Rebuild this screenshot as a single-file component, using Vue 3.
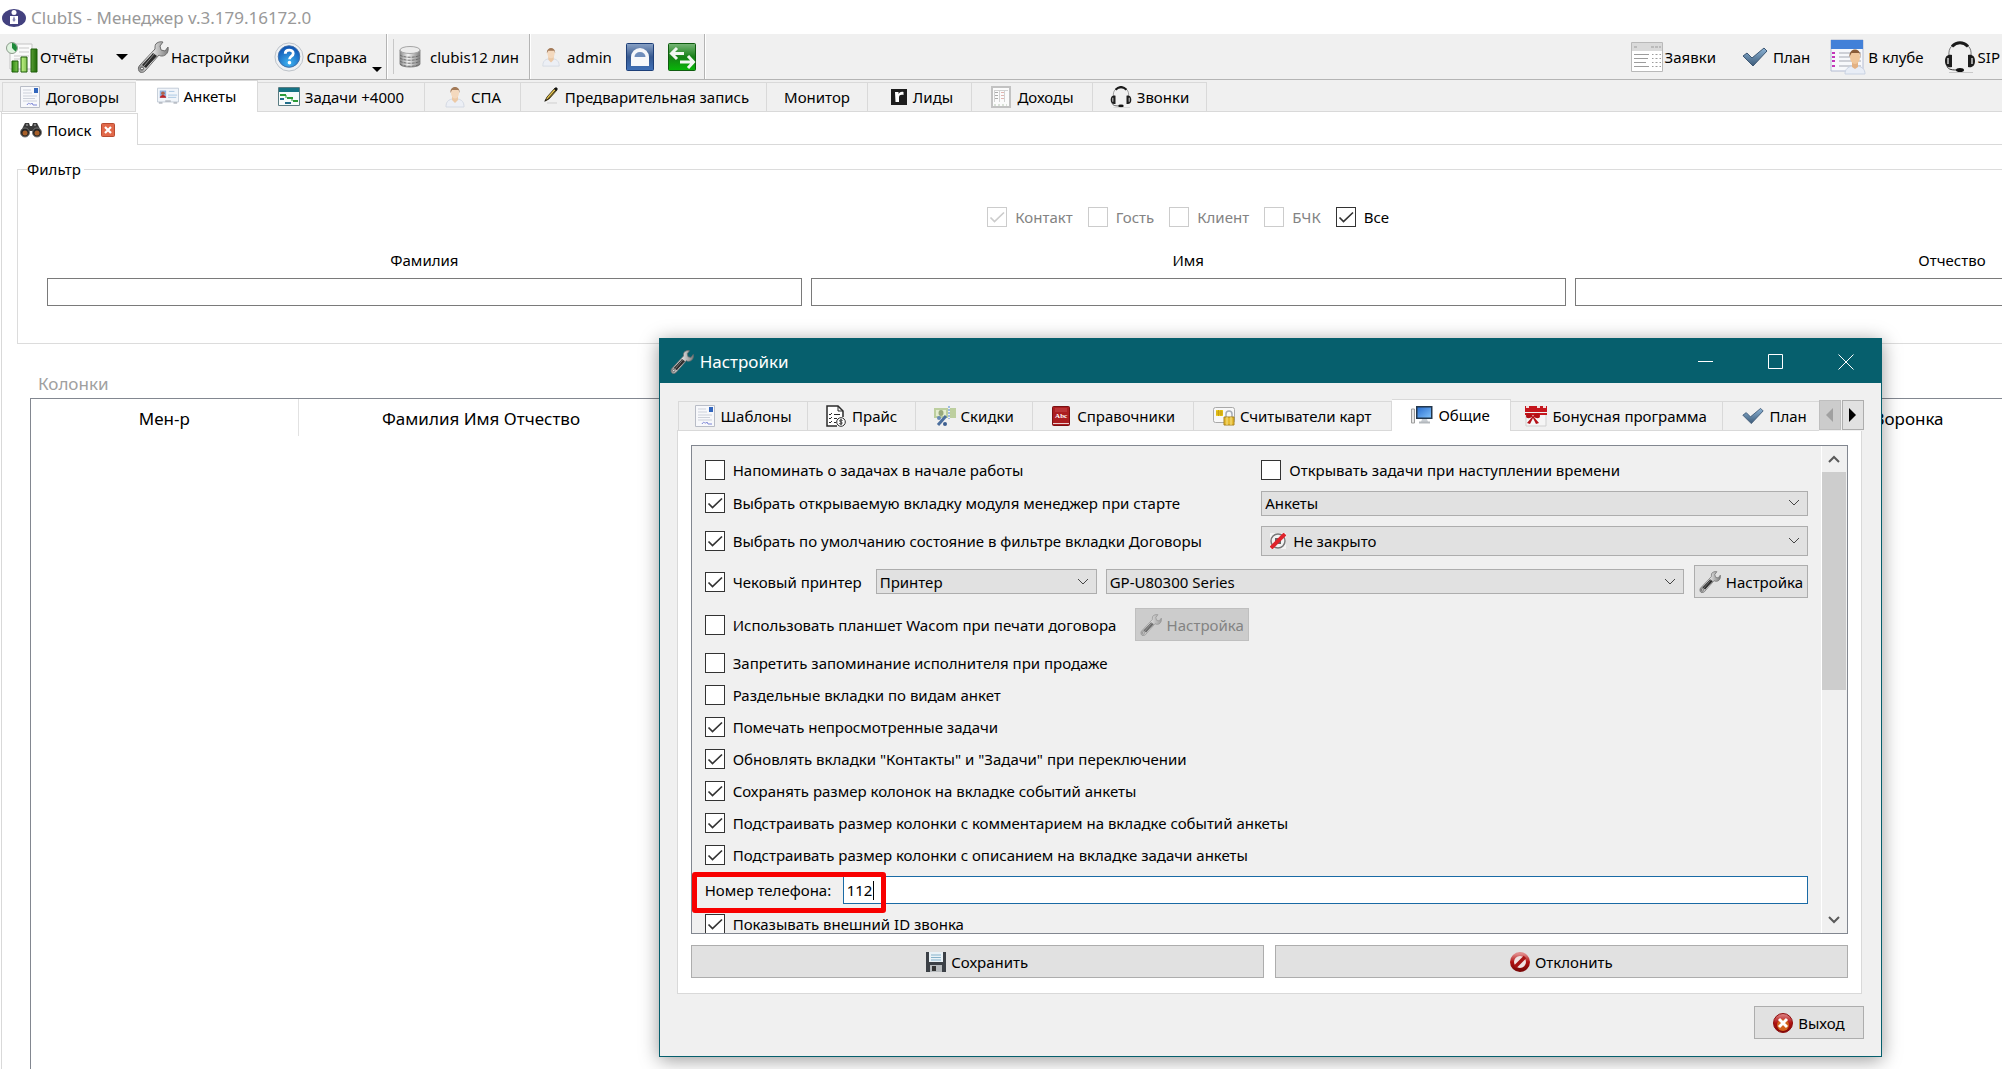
<template>
  <div class="app">
    <svg class="sprite" aria-hidden="true">
      <defs>
        <linearGradient id="gGreen" x1="0" x2="1">
          <stop offset="0" stop-color="#2f8a12" /><stop offset=".4" stop-color="#b6ec7c" /><stop offset="1" stop-color="#1f6a08" />
        </linearGradient>
        <linearGradient id="gMetal" x1="0" x2="1">
          <stop offset="0" stop-color="#8a8a8a" /><stop offset=".4" stop-color="#f4f4f4" /><stop offset="1" stop-color="#7d7d7d" />
        </linearGradient>
        <radialGradient id="gHelp" cx=".5" cy=".8" r=".8">
          <stop offset="0" stop-color="#3fb4f2" /><stop offset="1" stop-color="#0c4eae" />
        </radialGradient>
        <linearGradient id="gLock" x1="0" y1="0" x2="0" y2="1">
          <stop offset="0" stop-color="#8ba3c6" /><stop offset=".5" stop-color="#36588f" /><stop offset="1" stop-color="#3f70b8" />
        </linearGradient>
        <linearGradient id="gSwap" x1="0" y1="0" x2="0" y2="1">
          <stop offset="0" stop-color="#79b779" /><stop offset=".5" stop-color="#168016" /><stop offset="1" stop-color="#08b808" />
        </linearGradient>
        <linearGradient id="gCheck" x1="0" y1="0" x2="0" y2="1">
          <stop offset="0" stop-color="#8db4d6" /><stop offset="1" stop-color="#3c5a78" />
        </linearGradient>
        <linearGradient id="gRed" x1="0" y1="0" x2="0" y2="1">
          <stop offset="0" stop-color="#e08a8a" /><stop offset=".5" stop-color="#b01212" /><stop offset="1" stop-color="#7c0808" />
        </linearGradient>
        <linearGradient id="gBlue" x1="0" y1="0" x2="1" y2="1">
          <stop offset="0" stop-color="#2a6fd0" /><stop offset="1" stop-color="#7fc0fa" />
        </linearGradient>
      </defs>

      <symbol id="logo" viewBox="0 0 24 20">
        <ellipse cx="12" cy="10" rx="12" ry="9" fill="#43417f" />
        <circle cx="12" cy="4.500" r="2.500" fill="#fff" />
        <path d="M8 8h8v8H8z" fill="#fff" /><path d="M12 8l1.500 4-1.500 2-1.500-2z" fill="#8a89b5" />
      </symbol>
      <symbol id="report" viewBox="0 0 32 32">
        <path d="M4 3h22v25H4z" fill="#fafafa" stroke="#c4c4c4" />
        <path d="M13 7h10M13 11h10M8 15h15M8 18h8" stroke="#c9c9c9" />
        <circle cx="6" cy="7" r="5.500" fill="#dff3df" stroke="#8b9b8b" />
        <path d="M6 7V2a5 5 0 0 1 3.500 8.500z" fill="#1e8a3a" />
        <path d="M6 20h6v11H6zM15 16h6v15h-6zM25 8h6v23h-6z" fill="url(#gGreen)" stroke="#1c5c08" />
      </symbol>
      <symbol id="wrench" viewBox="0 0 32 32">
        <path d="M20 2c3-2 6-1 6-1l-3 4 1 4 4 1 3-4c1 5-2 9-6 9-1 0-2 0-3-1L8 30c-2 2-5 2-6 0s-1-4 1-6l15-16c0-3 0-5 2-6z" fill="url(#gMetal)" stroke="#6d6d6d" />
        <path d="M16 12l4 3L9 27l-4-3z" fill="#2c2c2c" /><path d="M17 13L7 25" stroke="#8d8d8d" />
        <circle cx="5" cy="27.500" r="1.500" fill="#efefef" stroke="#555" />
      </symbol>
      <symbol id="help" viewBox="0 0 32 32">
        <circle cx="16" cy="16" r="15" fill="#eef1f4" stroke="#b9bec4" />
        <circle cx="16" cy="15.500" r="11.500" fill="url(#gHelp)" stroke="#3f6ea8" />
        <path d="M12 12.500c0-5 8.500-5 8.500-.3 0 3-4 3-4 6.300" fill="none" stroke="#fff" stroke-width="3" />
        <circle cx="16.500" cy="22" r="1.900" fill="#fff" />
      </symbol>
      <symbol id="db" viewBox="0 0 22 22">
        <path d="M1 4v14c0 4 20 4 20 0V4z" fill="url(#gMetal)" stroke="#8c8c8c" />
        <path d="M1 9c3 3 17 3 20 0M1 12c3 3 17 3 20 0M1 15c3 3 17 3 20 0M1 18c3 3 17 3 20 0" fill="none" stroke="#6b6b6b" stroke-dasharray="3 1" />
        <ellipse cx="11" cy="4" rx="10" ry="3.500" fill="#ececec" stroke="#a5a5a5" />
      </symbol>
      <symbol id="person" viewBox="0 0 20 22">
        <path d="M1 21c0-5 2-7 6-8h6c4 1 6 3 6 8z" fill="#eceff5" stroke="#d4d9e3" />
        <path d="M7 10h6v4l-3 3-3-3z" fill="#ecc9a6" />
        <ellipse cx="10" cy="7" rx="4" ry="5.500" fill="#f4d9be" />
        <path d="M5.500 7c-1-8 10-8 9 0l-1-3H7z" fill="#a37a58" />
      </symbol>
      <symbol id="lock" viewBox="0 0 28 28">
        <rect x=".5" y=".5" width="27" height="27" rx="1" fill="url(#gLock)" stroke="#1d3f78" />
        <path d="M5 23V14a9 9 0 0 1 18 0v9z" fill="#f6f7fa" />
        <path d="M8.500 14a5.500 5 0 0 1 11 0z" fill="#6f8dbb" />
      </symbol>
      <symbol id="swap" viewBox="0 0 28 28">
        <rect x=".5" y=".5" width="27" height="27" rx="1" fill="url(#gSwap)" stroke="#0f5c0f" />
        <path d="M16 10.500H4M9 5l-5.500 5.500L9 16M12 19h12M20 13l5.500 6-5.500 6" fill="none" stroke="#f2f7f2" stroke-width="3" />
      </symbol>
      <symbol id="requests" viewBox="0 0 32 30">
        <path d="M.5.5h31v29H.5z" fill="#fff" stroke="#b9b9b9" /><path d="M1 1h30v8H1z" fill="#dadada" />
        <path d="M3 5h3M20 5h3M24 5h3M28 5h2M3 12.500h15M3 16.500h14M3 20.500h12M3 24.500h15M21 12.500h9M21 16.500h9M21 20.500h9M21 24.500h9" stroke="#9c9c9c" />
        <path d="M23.500 11v15M27.500 11v15" stroke="#fff" stroke-width="2" />
      </symbol>
      <symbol id="check" viewBox="0 0 26 20">
        <path d="M1 9l4-3 5 5L22 1l3 3-14 15z" fill="url(#gCheck)" stroke="#3c5774" stroke-linejoin="round" />
      </symbol>
      <symbol id="club" viewBox="0 0 36 36">
        <path d="M1 1h32v31H1z" fill="#f7f8fb" stroke="#b3bcd2" /><path d="M1 1h32v9H1z" fill="#4280d8" />
        <path d="M9 14h22M9 18h22M9 22h22M9 27h22" stroke="#a5a8b2" />
        <path d="M2 14h3M2 18h3M2 22h3M2 27h3" stroke="#c335b8" stroke-width="2" />
        <path d="M15 35c0-5 3-7 7-8h6c4 1 7 3 7 8z" fill="#e8edf6" stroke="#c9d2e2" />
        <path d="M22 22h6v6l-3 2-3-2z" fill="#e3b183" /><ellipse cx="25" cy="18" rx="5" ry="7" fill="#f0c79c" />
        <path d="M19.500 18c-1-10 12-10 11 0l-1-4h-8z" fill="#8a5c38" />
      </symbol>
      <symbol id="headset" viewBox="0 0 32 32">
        <path d="M5 15C4 6 9 2.500 16 2.500S28 6 27 15" fill="none" stroke="#777" />
        <path d="M8 5.500c5-5 11-5 16 0" fill="none" stroke="#1b1b1b" stroke-width="3" />
        <path d="M8 14v12c-4 1-7-1-7-6s3-7 7-6zM24 14v12c4 1 7-1 7-6s-3-7-7-6z" fill="#1d1d1d" />
        <path d="M4 17v6M28 17v6" stroke="#a2a2a2" stroke-width="2" />
        <path d="M3 25c1 4 6 4 11 4" fill="none" stroke="#333" /><ellipse cx="16" cy="29" rx="4" ry="2" fill="#111" />
        <path d="M5 31.500h24" stroke="#c9c9c9" />
      </symbol>
      <symbol id="doc" viewBox="0 0 20 22">
        <path d="M.5.500h19v21H.5z" fill="#f7f8fb" stroke="#b8bcc6" /><path d="M14 2h4v5h-4z" fill="#3266bd" />
        <path d="M3 4h8M3 7h9M3 10h14M3 12.500h12M3 15h14" stroke="#cdd1da" /><path d="M7 19c2-4 3 1 5-2l1 2h4" fill="none" stroke="#7d86d6" />
      </symbol>
      <symbol id="card" viewBox="0 0 24 18">
        <path d="M.5.500h23v15H.5z" fill="#f1f5fa" stroke="#c0c8d4" /><path d="M3 3h7v8H3z" fill="#8fb0df" />
        <circle cx="6.500" cy="6" r="2" fill="#b2634c" /><path d="M3 11c1-4 6-4 7 0z" fill="#c02222" />
        <path d="M13 4h6M12 8h10M12 10.500h9" stroke="#a9c6e2" /><path d="M2 16.500h4M9 14.500h6M18 16.500h4" stroke="#b9bec6" stroke-width="2" />
      </symbol>
      <symbol id="gantt" viewBox="0 0 22 20">
        <path d="M.5.500h21v18H.5z" fill="#f6fbfb" stroke="#5a7c82" /><path d="M1 1h20v4H1z" fill="#157284" />
        <path d="M2 8h6M9 11h6M15 14h5" stroke="#2b9a37" stroke-width="2" /><path d="M8 8v3M14 11v3" stroke="#2b9a37" />
        <path d="M2 12h4M7 16h6" stroke="#226f8c" stroke-width="2" />
      </symbol>
      <symbol id="pencil" viewBox="-5 -1 22 22">
        <path d="M2 14l2-4 8-9 2 2-8 9z" fill="#e9c64c" stroke="#4a4024" /><path d="M11 2l2-2 2 2-2 2z" fill="#111" /><path d="M13 3L4 13" stroke="#2c2715" /><path d="M1 15l2-3 1 1z" fill="#111" /><path d="M4 16h10" stroke="#cfcfcf" />
      </symbol>
      <symbol id="leads" viewBox="-5 -3 22 22">
        <path d="M0 0h16v16H0z" fill="#1d1d1d" /><path d="M4 3h3.500v2C9 3 10 2.500 12.500 3v3C10 5.500 8 6 8 8.500V13H4.500z" fill="#fff" />
      </symbol>
      <symbol id="sheet" viewBox="0 0 20 22">
        <path d="M1 1h18v20H1z" fill="#fbfbfb" stroke="#c2c2c2" stroke-width="2" />
        <path d="M3.500 4v12M8.500 4v12M13.500 4v12M3 4.500h14" stroke="#d2d2d2" /><path d="M4 6.500h3M4 9.500h3M4 12.500h3" stroke="#aaa" /><path d="M10 6.500h3M10 9.500h3M10 12.500h3" stroke="#e0b5b0" /><path d="M3 19h13" stroke="#b7c7b4" stroke-dasharray="2 2" />
      </symbol>
      <symbol id="binoculars" viewBox="0 0 22 16">
        <path d="M5 1h4l1 3h2l1-3h4l4 8v4h-8V9h-4v4H1V9z" fill="#3a3a3a" />
        <circle cx="5" cy="10.500" r="4.500" fill="#262626" stroke="#777" /><circle cx="17" cy="10.500" r="4.500" fill="#262626" stroke="#777" />
        <circle cx="5" cy="11" r="2.500" fill="#a8602a" /><circle cx="17" cy="11" r="2.500" fill="#a8602a" /><path d="M6 3h2M14 3h2" stroke="#bbb" />
      </symbol>
      <symbol id="closeTab" viewBox="0 0 14 14">
        <rect x=".5" y=".5" width="13" height="13" rx="1" fill="#e2694a" stroke="#b84c32" /><path d="M4 4l6 6M10 4l-6 6" stroke="#fff" stroke-width="2.200" />
      </symbol>
      <symbol id="price" viewBox="0 0 20 22">
        <path d="M17 12V6l-5-5H1v20h10" fill="#fff" stroke="#2b2b2b" stroke-width="1.500" /><path d="M12 1v5h5" fill="none" stroke="#2b2b2b" />
        <path d="M3 9l1 1 2-2M3 13l1 1 2-2M3 17l1 1 2-2M8 9.500h6M8 13.500h3M8 17.500h2" fill="none" stroke="#2b2b2b" />
        <circle cx="15" cy="17" r="4.300" fill="#fff" stroke="#2b2b2b" /><path d="M16.500 15.500c-3-1.500-4 1-1.500 1.500s1 3-1.700 1.500M15 14v6" fill="none" stroke="#2b2b2b" />
      </symbol>
      <symbol id="discount" viewBox="0 0 22 20">
        <path d="M0 2h14v10H0zM16 2h6v10h-6z" fill="#bdcf9f" /><path d="M2 4h10v6H2z" fill="#e4edd0" /><ellipse cx="7" cy="7" rx="2.500" ry="3" fill="#98a97c" />
        <path d="M15 0v13" stroke="#4a86d0" stroke-dasharray="2 1" /><path d="M12 10L4 19" stroke="#4c6f9e" stroke-width="3" /><circle cx="5" cy="12" r="2" fill="#6689b6" /><circle cx="11" cy="18" r="2" fill="#3d5f90" />
      </symbol>
      <symbol id="book" viewBox="-2 -1 22 22">
        <rect x=".5" y=".5" width="17" height="19" rx="1" fill="#ab1d20" stroke="#791012" /><path d="M1 17.500h16" stroke="#e9d0d0" /><path d="M3 3h12M3 5h12" stroke="#c84a4c" />
      </symbol>
      <symbol id="reader" viewBox="0 0 22 20">
        <rect x=".5" y="1.500" width="21" height="15" rx="2" fill="#f8f8f8" stroke="#a9a9a9" /><path d="M3 4h7v6H3z" fill="#f0cf1e" /><path d="M3 6h7M3 8h7M5.500 4v6M8 4v6" stroke="#c79f12" />
        <path d="M13 12V8c0-4 6-4 6 0v4" fill="none" stroke="#a6acb4" stroke-width="1.500" /><path d="M11 11h10v8H11z" fill="#e5bb32" stroke="#a8821c" /><path d="M14 11v8M18 11v8" stroke="#f7e28c" />
      </symbol>
      <symbol id="computer" viewBox="0 0 22 20">
        <path d="M.5 4h3v14h-3z" fill="#e7e7e7" stroke="#9c9c9c" /><path d="M5 1h16.500v13H5z" fill="#23374c" /><path d="M6.500 2.500h13.500v10H6.500z" fill="url(#gBlue)" />
        <path d="M11 14h5l1 3h-7z" fill="#c9ced3" /><path d="M8 17.500h11" stroke="#b3b8bd" stroke-width="2" />
      </symbol>
      <symbol id="gift" viewBox="0 0 22 22">
        <path d="M1 9h20v12H1z" fill="#f5f5f5" stroke="#cfcfcf" /><path d="M0 1h22v6H0zM0 8h22v2H0z" fill="#c5161d" /><path d="M1 1h3v2H1zM12 1h3v2h-3zM18 1h3v2h-3z" fill="#f5dede" />
        <path d="M8 11c-4-4-7-3-7 0s4 3 7 0zM8 11c4-4 7-3 7 0s-4 3-7 0zM8 11l-6 7 3 1 3-6 3 6 3-1z" fill="#b40f16" />
      </symbol>
      <symbol id="notClosed" viewBox="0 0 16 16">
        <path d="M0 0h16v16H0z" fill="#f3f3f3" /><circle cx="8" cy="8" r="7" fill="none" stroke="#777" stroke-width="1.500" /><path d="M5 5h6v6H5z" fill="#666" /><path d="M1 15L15 1" stroke="#df242c" stroke-width="4" />
      </symbol>
      <symbol id="save" viewBox="0 0 20 20">
        <path d="M0 0h20v20H0z" fill="#3b4046" /><path d="M3 0h14v10H3z" fill="#eaf2f7" /><path d="M5 3h10M5 5.500h10M5 8h10" stroke="#87b3cb" /><path d="M4 13h12v7H4z" fill="#b6babd" /><path d="M6 14h4v5H6z" fill="#333" />
      </symbol>
      <symbol id="deny" viewBox="0 0 20 20">
        <circle cx="10" cy="10" r="8" fill="#efe3e3" stroke="url(#gRed)" stroke-width="4" /><path d="M5 15L15 5" stroke="#a81414" stroke-width="3.500" />
      </symbol>
      <symbol id="exit" viewBox="0 0 20 20">
        <circle cx="10" cy="10" r="9.500" fill="url(#gRed)" stroke="#8e0d0d" /><ellipse cx="10" cy="12" rx="6" ry="6" fill="#d2621c" /><path d="M6 6l8 8M14 6l-8 8" stroke="#fff" stroke-width="3" />
      </symbol>
    </svg>

    <header class="titlebar">
      <svg class="logo"><use href="#logo" /></svg>
      <span>ClubIS - Менеджер v.3.179.16172.0</span>
    </header>

    <div class="toolbar">
      <div class="tool-group group-main">
        <button class="tool reports" type="button"><svg class="i32"><use href="#report" /></svg>Отчёты<i class="arrow"></i></button>
        <button class="tool" type="button"><svg class="i32"><use href="#wrench" /></svg>Настройки</button>
        <button class="tool help" type="button"><svg class="i30"><use href="#help" /></svg>Справка<i class="arrow small"></i></button>
      </div>
      <div class="tool-group group-db">
        <button class="tool" type="button"><svg class="i22"><use href="#db" /></svg>clubis12 лин</button>
      </div>
      <div class="tool-group group-user">
        <button class="tool" type="button"><svg class="i20"><use href="#person" /></svg>admin</button>
        <button class="tool" type="button" aria-label="Блокировка"><svg class="i28"><use href="#lock" /></svg></button>
        <button class="tool" type="button" aria-label="Сменить пользователя"><svg class="i28"><use href="#swap" /></svg></button>
      </div>
      <div class="tool-right">
        <button class="tool" type="button"><svg class="i32"><use href="#requests" /></svg>Заявки</button>
        <button class="tool plan" type="button"><svg class="i26"><use href="#check" /></svg>План</button>
        <button class="tool" type="button"><svg class="i36"><use href="#club" /></svg>В клубе</button>
        <button class="tool" type="button"><svg class="i32"><use href="#headset" /></svg>SIP</button>
      </div>
    </div>

    <nav class="tabs" role="tablist">
      <button
        v-for="tab in mainTabs"
        :key="tab.title"
        class="tab"
        :class="{ active: tab.title === activeMain }"
        :style="{ width: tab.width + 'px' }"
        type="button"
        role="tab"
        @click="activeMain = tab.title"
      >
        <svg v-if="tab.icon" class="tab-icon"><use :href="'#' + tab.icon" /></svg>{{ tab.title }}
      </button>
    </nav>

    <main class="page">
      <div class="subtabs">
        <div class="subtab">
          <svg class="i22"><use href="#binoculars" /></svg>
          <span>Поиск</span>
          <button class="close-tab" type="button" aria-label="Закрыть вкладку"><svg class="i14"><use href="#closeTab" /></svg></button>
        </div>
      </div>

      <fieldset class="filter">
        <legend>Фильтр</legend>
        <div class="kinds">
          <label v-for="kind in kinds" :key="kind.title" class="check" :class="{ off: kind.disabled }">
            <input v-model="kind.checked" type="checkbox" :disabled="kind.disabled" />{{ kind.title }}
          </label>
        </div>
        <div class="names">
          <label v-for="name in ['Фамилия', 'Имя', 'Отчество']" :key="name">{{ name }}<input type="text" /></label>
        </div>
      </fieldset>

      <section class="list">
        <p class="columns-title">Колонки</p>
        <div class="table-box">
          <table>
            <thead>
              <tr>
                <th class="col-manager">Мен-р</th>
                <th class="col-name">Фамилия Имя Отчество</th>
                <th></th>
                <th class="col-funnel">Воронка</th>
              </tr>
            </thead>
          </table>
        </div>
      </section>
    </main>

    <div class="dialog" role="dialog" aria-labelledby="dialog-title">
      <div class="dialog-head">
        <svg class="i24"><use href="#wrench" /></svg>
        <span id="dialog-title">Настройки</span>
        <div class="window-buttons">
          <button type="button" aria-label="Свернуть"><svg viewBox="0 0 16 16"><path d="M0 7.500h15" /></svg></button>
          <button type="button" aria-label="Развернуть"><svg viewBox="0 0 16 16"><path d="M.5.500h14v14H.5z" /></svg></button>
          <button type="button" aria-label="Закрыть"><svg viewBox="0 0 16 16"><path d="M.5.500l15 15M15.500.500l-15 15" /></svg></button>
        </div>
      </div>

      <div class="dialog-body">
        <div class="dialog-tabs">
          <div class="tabs" role="tablist">
            <button
              v-for="tab in settingsTabs"
              :key="tab.title"
              class="tab"
              :class="{ active: tab.title === activeSettings }"
              :style="{ width: tab.width + 'px' }"
              type="button"
              role="tab"
              @click="activeSettings = tab.title"
            >
              <span class="icon-box">
                <svg class="tab-icon"><use :href="'#' + tab.icon" /></svg>
                <small v-if="tab.mark">{{ tab.mark }}</small>
              </span>{{ tab.title }}
            </button>
          </div>
          <button class="scroll-tab" type="button" disabled aria-label="Влево"><i class="tri left"></i></button>
          <button class="scroll-tab" type="button" aria-label="Вправо"><i class="tri right"></i></button>
        </div>

        <div class="panel">
          <div class="scroll-box">
            <form class="options" @submit.prevent>
              <div class="row two">
                <label class="check"><input type="checkbox" />Напоминать о задачах в начале работы</label>
                <label class="check"><input type="checkbox" />Открывать задачи при наступлении времени</label>
              </div>
              <div class="row two start-row">
                <label class="check"><input type="checkbox" checked />Выбрать открываемую вкладку модуля менеджер при старте</label>
                <div class="combo">
                  <select aria-label="Вкладка при старте"><option>Анкеты</option></select>
                  <svg class="chevron" viewBox="0 0 12 8"><path d="M1 1l5 5 5-5" /></svg>
                </div>
              </div>
              <div class="row two state-row">
                <label class="check"><input type="checkbox" checked />Выбрать по умолчанию состояние в фильтре вкладки Договоры</label>
                <div class="combo with-icon">
                  <svg class="combo-icon"><use href="#notClosed" /></svg>
                  <select aria-label="Состояние договора"><option>Не закрыто</option></select>
                  <svg class="chevron" viewBox="0 0 12 8"><path d="M1 1l5 5 5-5" /></svg>
                </div>
              </div>
              <div class="row tall">
                <label class="check first"><input type="checkbox" checked />Чековый принтер</label>
                <div class="combo device">
                  <select aria-label="Устройство"><option>Принтер</option></select>
                  <svg class="chevron" viewBox="0 0 12 8"><path d="M1 1l5 5 5-5" /></svg>
                </div>
                <div class="combo model">
                  <select aria-label="Модель"><option>GP-U80300 Series</option></select>
                  <svg class="chevron" viewBox="0 0 12 8"><path d="M1 1l5 5 5-5" /></svg>
                </div>
                <button class="btn setup" type="button"><svg class="i22"><use href="#wrench" /></svg>Настройка</button>
              </div>
              <div class="row tall">
                <label class="check tablet"><input type="checkbox" />Использовать планшет Wacom при печати договора</label>
                <button class="btn setup" type="button" disabled><svg class="i22"><use href="#wrench" /></svg>Настройка</button>
              </div>
              <div class="option-list">
                <label v-for="option in options" :key="option.title" class="check">
                  <input v-model="option.checked" type="checkbox" />{{ option.title }}
                </label>
              </div>
              <div class="row phone">
                <label for="phone">Номер телефона:</label>
                <div class="phone-field"><input id="phone" v-model="phone" type="text" /><i class="caret"></i></div>
                <span class="marker"></span>
              </div>
              <label class="check"><input type="checkbox" checked />Показывать внешний ID звонка</label>
            </form>
            <div class="scrollbar">
              <svg viewBox="0 0 12 10"><path d="M1 8l5-5 5 5" /></svg>
              <div class="track"><div class="thumb"></div></div>
              <svg viewBox="0 0 12 10"><path d="M1 2l5 5 5-5" /></svg>
            </div>
          </div>
          <div class="actions">
            <button class="btn" type="button"><svg class="i20"><use href="#save" /></svg>Сохранить</button>
            <button class="btn" type="button"><svg class="i20"><use href="#deny" /></svg>Отклонить</button>
          </div>
        </div>

        <button class="btn exit" type="button"><svg class="i20"><use href="#exit" /></svg>Выход</button>
      </div>
    </div>
  </div>
</template>

<script setup>
import { ref } from 'vue'

const activeMain = ref('Анкеты')
const activeSettings = ref('Общие')
const phone = ref('112')

const mainTabs = [
  { title: 'Договоры', icon: 'doc', width: 134 },
  { title: 'Анкеты', icon: 'card', width: 122 },
  { title: 'Задачи +4000', icon: 'gantt', width: 167 },
  { title: 'СПА', icon: 'person', width: 96 },
  { title: 'Предварительная запись', icon: 'pencil', width: 246 },
  { title: 'Монитор', width: 101 },
  { title: 'Лиды', icon: 'leads', width: 104 },
  { title: 'Доходы', icon: 'sheet', width: 121 },
  { title: 'Звонки', icon: 'headset', width: 114 }
]

const settingsTabs = [
  { title: 'Шаблоны', icon: 'doc', width: 130 },
  { title: 'Прайс', icon: 'price', width: 108 },
  { title: 'Скидки', icon: 'discount', width: 117 },
  { title: 'Справочники', icon: 'book', mark: 'Abc', width: 161 },
  { title: 'Считыватели карт', icon: 'reader', width: 198 },
  { title: 'Общие', icon: 'computer', width: 119 },
  { title: 'Бонусная программа', icon: 'gift', width: 212 },
  { title: 'План', icon: 'check', width: 104 }
]

const kinds = ref([
  { title: 'Контакт', checked: true, disabled: true },
  { title: 'Гость', checked: false, disabled: true },
  { title: 'Клиент', checked: false, disabled: true },
  { title: 'БЧК', checked: false, disabled: true },
  { title: 'Все', checked: true, disabled: false }
])

const options = ref([
  { title: 'Запретить запоминание исполнителя при продаже', checked: false },
  { title: 'Раздельные вкладки по видам анкет', checked: false },
  { title: 'Помечать непросмотренные задачи', checked: true },
  { title: 'Обновлять вкладки "Контакты" и "Задачи" при переключении', checked: true },
  { title: 'Сохранять размер колонок на вкладке событий анкеты', checked: true },
  { title: 'Подстраивать размер колонки с комментарием на вкладке событий анкеты', checked: true },
  { title: 'Подстраивать размер колонки с описанием на вкладке задачи анкеты', checked: true }
])
</script>

<style>
body {
  overflow: hidden;
}
</style>

<style scoped>
.app {
  display: flex;
  flex-direction: column;
  height: 100vh;
  overflow: hidden;
  background: #fff;
  color: #000;
  font: 15px/20px 'Noto Sans', sans-serif;
}

.app * {
  box-sizing: border-box;
}

.sprite {
  position: absolute;
  width: 0;
  height: 0;
}

svg {
  flex: none;
}

button,
input,
select {
  margin: 0;
  color: inherit;
  font: inherit;
}

.i14 { width: 14px; height: 14px; }
.i20 { width: 20px; height: 20px; }
.i22 { width: 22px; height: 22px; }
.i24 { width: 24px; height: 24px; }
.i26 { width: 26px; height: 26px; }
.i28 { width: 28px; height: 28px; }
.i30 { width: 30px; height: 30px; }
.i32 { width: 32px; height: 32px; }
.i36 { width: 36px; height: 36px; }

.titlebar {
  display: flex;
  flex: none;
  align-items: center;
  gap: 5px;
  height: 34px;
  padding: 2px 0 0 2px;
  color: #999;
  font-size: 17px;
}

.logo {
  width: 24px;
  height: 20px;
}

/* панель инструментов */
.toolbar {
  display: flex;
  flex: none;
  height: 46px;
  background: #f0f0f0;
  border-bottom: 1px solid #b4b4b4;
}

.tool-group {
  display: flex;
  align-items: center;
  border-right: 1px solid #b4b4b4;
  box-shadow: 1px 0 #fff;
}

.tool {
  display: flex;
  align-items: center;
  gap: 2px;
  padding: 0;
  border: 0;
  background: none;
  white-space: nowrap;
}

.group-main {
  width: 387px;
  padding-left: 6px;
}

.reports {
  width: 131px;
}

.arrow {
  margin-left: 20px;
  border: 6px solid transparent;
  border-top-color: #000;
  border-bottom: 0;
}

.arrow.small {
  align-self: flex-end;
  margin-left: 3px;
  border-width: 5px 5px 0;
}

.help {
  margin-left: auto;
  padding-right: 4px;
}

.group-db {
  width: 143px;
}

.group-user {
  width: 175px;
}

.group-db::before,
.group-user::before {
  content: '';
  width: 1px;
  height: 35px;
  margin: 0 5px 0 6px;
  background: #c8c8c8;
}

.group-db .tool {
  gap: 9px;
}

.group-user .tool {
  gap: 6px;
  margin-right: 14px;
}

.tool-right {
  display: flex;
  align-items: center;
  gap: 20px;
  margin-left: auto;
  padding-right: 2px;
}

.plan {
  gap: 5px;
  margin-left: 6px;
}

/* вкладки */
.tabs {
  display: flex;
  flex: none;
  align-items: flex-end;
  height: 32px;
  padding: 0 0 0 2px;
  background: linear-gradient(#d9d9d9, #d9d9d9) bottom / 100% 1px no-repeat #f0f0f0;
}

.tab {
  display: flex;
  flex: none;
  align-items: center;
  justify-content: center;
  gap: 5px;
  height: 30px;
  padding: 0;
  border: 1px solid #d9d9d9;
  border-left-width: 0;
  background: #f0f0f0;
  white-space: nowrap;
}

.tab:first-child {
  border-left-width: 1px;
}

.tab.active {
  height: 32px;
  padding-bottom: 2px;
  border-bottom: 0;
  background: #fff;
}

.tab-icon {
  width: 22px;
  height: 22px;
}

.icon-box {
  position: relative;
  display: flex;
}

.icon-box small {
  position: absolute;
  inset: 0;
  font: bold 7px/22px 'Liberation Serif', serif;
  color: #fff;
  text-align: center;
}

.page {
  flex: 1;
  margin-left: 1px;
  border-left: 1px solid #d9d9d9;
}

.subtabs {
  display: flex;
  height: 33px;
  padding-top: 1px;
}

.subtabs::after {
  content: '';
  flex: 1;
  border-bottom: 1px solid #d9d9d9;
}

.subtab {
  display: flex;
  align-items: center;
  gap: 5px;
  width: 136px;
  padding-left: 18px;
  border: 1px solid #d9d9d9;
  border-bottom: 0;
  border-left: 0;
}

.close-tab {
  display: flex;
  margin-left: 4px;
  padding: 0;
  border: 0;
  background: none;
}

/* фильтр */
.filter {
  width: 117vw;
  margin: 14px 0 0 15px;
  padding: 28px 29px 37px;
  border: 1px solid #dcdcdc;
}

.filter legend {
  margin-left: -20px;
  padding: 0 3px 0 0;
}

.kinds {
  display: flex;
  justify-content: center;
  gap: 15px;
}

.check {
  display: flex;
  align-items: center;
  gap: 8px;
  height: 20px;
  line-height: 22px;
  white-space: nowrap;
}

.check.off {
  color: #838383;
}

.check input {
  flex: none;
  width: 20px;
  height: 20px;
  appearance: none;
  border: 1px solid #333;
  background: #fff;
}

.check input:checked {
  background: url("data:image/svg+xml,%3Csvg xmlns='http://www.w3.org/2000/svg' viewBox='0 0 18 18'%3E%3Cpath d='M2.500 9.500l4 4L16 4.500' fill='none' stroke='%23333' stroke-width='1.700'/%3E%3C/svg%3E") #fff;
}

.check input:disabled {
  border-color: #ccc;
}

.check input:disabled:checked {
  background: url("data:image/svg+xml,%3Csvg xmlns='http://www.w3.org/2000/svg' viewBox='0 0 18 18'%3E%3Cpath d='M2.500 9.500l4 4L16 4.500' fill='none' stroke='%23ccc' stroke-width='1.700'/%3E%3C/svg%3E") #fff;
}

.names {
  display: grid;
  grid-template-columns: repeat(3, 1fr);
  gap: 9px;
  margin-top: 23px;
}

.names label {
  display: grid;
  gap: 8px;
  text-align: center;
}

.names input {
  width: 100%;
  height: 28px;
  border: 1px solid #7a7a7a;
}

/* список анкет */
.list {
  margin: 30px 0 0 28px;
  font-size: 17px;
}

.columns-title {
  margin: 0;
  padding: 0 0 4px 8px;
  color: #a0a0a0;
}

.table-box {
  width: 117vw;
  height: 100vh;
  border: 1px solid #828790;
}

table {
  width: 1974px;
  border-collapse: collapse;
  table-layout: fixed;
}

th {
  height: 37px;
  padding: 2px 0 0;
  border-right: 1px solid #e2e2e2;
  font-weight: 400;
}

.col-manager { width: 267px; }
.col-name { width: 366px; }
.col-funnel { width: 192px; }

/* окно настроек */
.dialog {
  position: absolute;
  top: 338px;
  left: 32.9%;
  width: 61.1%;
  background: #f0f0f0;
  border: 1px solid #065f6d;
  box-shadow: 0 3px 18px rgba(0, 0, 0, 0.4);
}

.dialog-head {
  display: flex;
  align-items: center;
  gap: 6px;
  height: 44px;
  padding: 2px 0 0 10px;
  background: #065f6d;
  color: #fff;
  font-size: 17px;
}

.window-buttons {
  display: flex;
  margin-left: auto;
}

.window-buttons button {
  display: flex;
  width: 70px;
  padding: 0 27px;
  border: 0;
  background: none;
}

.window-buttons svg {
  width: 16px;
  height: 16px;
  fill: none;
  stroke: #fff;
}

.dialog-body {
  display: flex;
  flex-direction: column;
  padding: 16px 17px 17px;
}

.dialog-tabs {
  display: flex;
}

.dialog-tabs .tabs {
  flex: 1;
  min-width: 0;
  padding-left: 1px;
  overflow: hidden;
}

.dialog-tabs .tab:last-child {
  border-right: 0;
}

.scroll-tab {
  display: grid;
  place-items: center;
  width: 22px;
  height: 30px;
  margin: 1px 0 0 1px;
  padding: 0;
  border: 1px solid #adadad;
  background: #e1e1e1;
}

.scroll-tab:disabled {
  margin-left: 0;
  border-color: #bfbfbf;
  background: #ccc;
}

.tri {
  border: 7px solid transparent;
}

.tri.left {
  border-right-color: #a0a0a0;
  border-left-width: 0;
}

.tri.right {
  border-left-color: #000;
  border-right-width: 0;
}

.panel {
  margin-right: 2px;
  padding: 14px 13px 15px;
  border: 1px solid #d9d9d9;
  border-top: 0;
  background: #fff;
}

.scroll-box {
  display: flex;
  height: 489px;
  overflow: hidden;
  border: 1px solid #828790;
  background: #f0f0f0;
}

.options {
  display: flex;
  flex: 1;
  flex-direction: column;
  gap: 10px;
  min-width: 0;
  padding: 14px 13px 0;
}

.row {
  display: flex;
  flex: none;
  align-items: center;
}

.two {
  display: grid;
  grid-template-columns: 557fr 547fr;
}

.start-row {
  height: 26px;
}

.state-row {
  height: 29px;
}

.tall {
  height: 33px;
}

.first {
  width: 171px;
}

.tablet {
  width: 430px;
}

.combo {
  position: relative;
  height: 25px;
}

.combo select {
  width: 100%;
  height: 100%;
  padding: 0 24px 0 3px;
  appearance: none;
  border: 1px solid #adadad;
  border-radius: 0;
  background: #e1e1e1;
}

.combo.with-icon {
  height: 30px;
}

.with-icon select {
  padding-left: 31px;
}

.combo-icon {
  position: absolute;
  top: 7px;
  left: 9px;
  width: 16px;
  height: 16px;
}

.chevron {
  position: absolute;
  top: calc(50% - 4px);
  right: 8px;
  width: 12px;
  height: 8px;
  fill: none;
  stroke: #444;
}

.device {
  width: 221px;
  margin-right: 9px;
}

.model {
  flex: 1;
  margin-right: 10px;
}

.btn {
  display: flex;
  align-items: center;
  justify-content: center;
  gap: 5px;
  height: 33px;
  padding: 0;
  border: 1px solid #adadad;
  background: #e1e1e1;
}

.btn:disabled {
  border-color: #bfbfbf;
  background: #ccc;
  color: #838383;
}

.btn:disabled svg {
  opacity: 0.6;
}

.setup {
  width: 114px;
}

.option-list {
  display: grid;
  flex: none;
  gap: 12px;
  padding: 2px 0 1px;
}

.phone {
  position: relative;
  height: 28px;
}

.phone label {
  width: 138px;
}

.phone-field {
  position: relative;
  flex: 1;
  height: 28px;
}

.phone-field input {
  width: 100%;
  height: 100%;
  padding: 0 3px;
  border: 1px solid #1a6aa5;
  outline: 0;
  background: #fff;
}

.caret {
  position: absolute;
  top: 5px;
  left: 30px;
  width: 1px;
  height: 19px;
  background: #000;
}

.marker {
  position: absolute;
  top: -4px;
  left: -13px;
  width: 194px;
  height: 41px;
  border: 5px solid #f80000;
  border-radius: 3px;
}

.scrollbar {
  display: flex;
  flex-direction: column;
  align-items: center;
  width: 26px;
  border-left: 1px solid #fff;
}

.scrollbar svg {
  width: 12px;
  height: 26px;
  fill: none;
  stroke: #5a5a5a;
  stroke-width: 2;
}

.track {
  flex: 1;
  align-self: stretch;
}

.thumb {
  height: 50%;
  margin-right: 1px;
  background: #cdcdcd;
}

.actions {
  display: grid;
  grid-template-columns: 1fr 1fr;
  gap: 11px;
  margin-top: 11px;
}

.exit {
  width: 110px;
  margin-top: 12px;
  align-self: flex-end;
}
</style>
